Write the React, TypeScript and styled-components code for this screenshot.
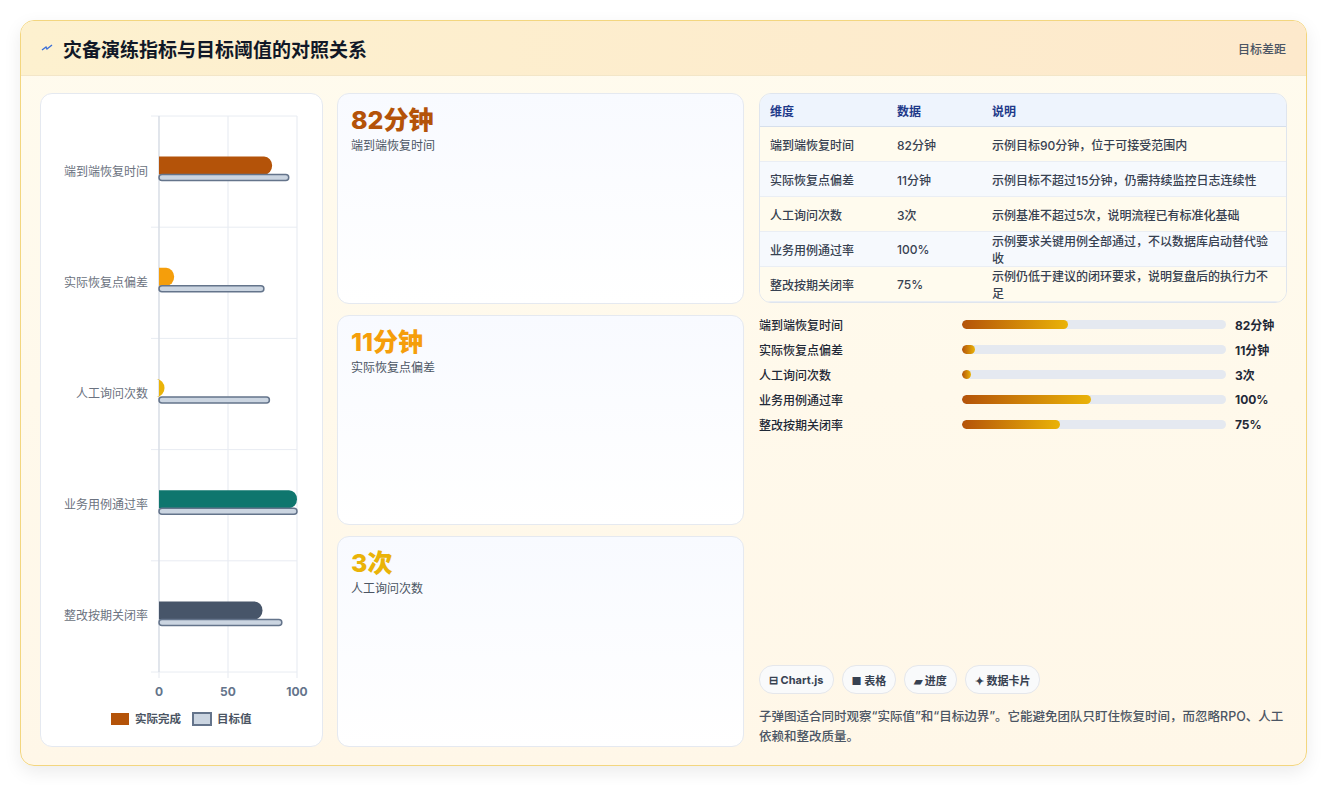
import React from 'react';
import styled, { createGlobalStyle } from 'styled-components';

const Global = createGlobalStyle`
  html, body { margin: 0; padding: 0; background: #ffffff; }
  body { font-family: Inter, "Noto Sans CJK SC", sans-serif; }
`;

const Page = styled.div`
  padding: 20px 20px 19px 20px;
`;

const Card = styled.div`
  border: 1px solid #f3d67f;
  border-radius: 14px;
  background: linear-gradient(180deg, #fffbee 0%, #fff7e8 100%);
  box-shadow: 0 6px 18px rgba(0, 0, 0, 0.08);
  overflow: hidden;
  height: 744px;
  display: flex;
  flex-direction: column;
`;

const Header = styled.div`
  height: 54px;
  display: flex;
  align-items: center;
  justify-content: space-between;
  padding: 0 20px 0 20px;
  background: linear-gradient(90deg, #fdf1cf 0%, #fde9cc 100%);
  border-bottom: 1px solid #f3e6c8;
`;

const Title = styled.h2`
  margin: 0;
  font-size: 19px;
  font-weight: 700;
  color: #111827;
  display: flex;
  align-items: center;
  gap: 10px;
`;

const HeaderHint = styled.span`
  font-size: 12px;
  color: #4b5563;
  font-weight: 500;
`;

const Body = styled.div`
  flex: 1;
  display: grid;
  grid-template-columns: 283px 407px 1fr;
  gap: 14px;
  padding: 17px 19px 18px 19px;
  min-height: 0;
`;

const Panel = styled.div`
  background: linear-gradient(180deg, #f8faff 0%, #ffffff 100%);
  border: 1px solid #e5e9f0;
  border-radius: 12px;
`;

const ChartPanel = styled(Panel)`
  background: #ffffff;
  display: flex;
  flex-direction: column;
`;

const Stack = styled.div`
  display: grid;
  grid-template-rows: 1fr 1fr 1fr;
  gap: 11px;
`;

const StatCard = styled(Panel)`
  padding: 10px 13px;
`;

const StatValue = styled.div<{ $color: string }>`
  font-size: 25px;
  font-weight: 800;
  color: ${p => p.$color};
  line-height: 32px;
`;

const StatLabel = styled.div`
  font-size: 12px;
  color: #4b5563;
`;

const RightCol = styled.div`
  display: flex;
  flex-direction: column;
  padding-left: 1px;
`;

const Table = styled.table`
  width: 100%;
  border-collapse: separate;
  border-spacing: 0;
  border: 1px solid #dfe5ee;
  border-radius: 12px;
  overflow: hidden;
  font-size: 12px;
`;

const Th = styled.th`
  text-align: left;
  font-weight: 700;
  color: #1e3a8a;
  background: #eef4fd;
  padding: 0 10px;
  height: 32px;
  border-bottom: 1px solid #d6dfec;
`;

const Td = styled.td<{ $alt: boolean }>`
  padding: 0 10px;
  height: 34px;
  color: #374151;
  font-weight: 500;
  background: ${p => (p.$alt ? '#f6f9fd' : '#fffbee')};
  border-bottom: 1px solid #eaeef4;
`;

const Bars = styled.div`
  display: flex;
  flex-direction: column;
  gap: 7px;
  margin-top: 12px;
`;

const BarRow = styled.div`
  display: grid;
  grid-template-columns: 194px 264px 1fr;
  gap: 9px;
  align-items: center;
  height: 18px;
  font-size: 12px;
  color: #1f2937;
  font-weight: 500;
`;

const Track = styled.div`
  height: 9px;
  border-radius: 5px;
  background: #e5e9f0;
  overflow: hidden;
`;

const Fill = styled.div`
  height: 100%;
  border-radius: 5px;
  background: linear-gradient(90deg, #b45309 0%, #eab308 100%);
`;

const BarValue = styled.span`
  font-weight: 700;
  color: #1f2937;
`;

const Spacer = styled.div`
  flex: 1;
`;

const Chips = styled.div`
  display: flex;
  gap: 8px;
`;

const Chip = styled.span`
  display: inline-flex;
  align-items: center;
  gap: 4px;
  height: 27px;
  padding: 0 9px;
  border: 1px solid #e5e7eb;
  border-radius: 14px;
  background: #f9fafb;
  font-size: 11px;
  font-weight: 700;
  color: #374151;
`;

const Note = styled.p`
  margin: 13px 0 0 0;
  font-size: 12.5px;
  line-height: 20px;
  color: #4b5563;
  font-weight: 500;
`;

const rows = [
  { name: '端到端恢复时间', data: '82分钟', desc: '示例目标90分钟，位于可接受范围内', pct: 40 },
  { name: '实际恢复点偏差', data: '11分钟', desc: '示例目标不超过15分钟，仍需持续监控日志连续性', pct: 5 },
  { name: '人工询问次数', data: '3次', desc: '示例基准不超过5次，说明流程已有标准化基础', pct: 3.5 },
  { name: '业务用例通过率', data: '100%', desc: '示例要求关键用例全部通过，不以数据库启动替代验收', pct: 49 },
  { name: '整改按期关闭率', data: '75%', desc: '示例仍低于建议的闭环要求，说明复盘后的执行力不足', pct: 37 },
];

const chartData = [
  { label: '端到端恢复时间', actual: 82, target: 94, color: '#b45309' },
  { label: '实际恢复点偏差', actual: 11, target: 76, color: '#f59e0b' },
  { label: '人工询问次数', actual: 4, target: 80, color: '#eab308' },
  { label: '业务用例通过率', actual: 100, target: 100, color: '#0f766e' },
  { label: '整改按期关闭率', actual: 75, target: 89, color: '#475569' },
];

const BulletChart = () => {
  const x0 = 118;
  const w = 138;
  const top = 22;
  const rowH = 111.2;
  const bottom = top + rowH * 5;
  const sx = (v: number) => x0 + (v / 100) * w;
  return (
    <svg width="281" height="651" viewBox="0 0 281 651">
      {[0, 50, 100].map(v => (
        <line key={v} x1={sx(v)} x2={sx(v)} y1={top} y2={bottom + 6} stroke="#e5e9f0" />
      ))}
      {[0, 1, 2, 3, 4, 5].map(i => (
        <line key={i} x1={x0 - 8} x2={x0 + w} y1={top + i * rowH} y2={top + i * rowH} stroke="#e8ecf2" />
      ))}
      <line x1={x0} x2={x0} y1={top} y2={bottom} stroke="#d1d7e0" />
      {chartData.map((d, i) => {
        const cy = top + i * rowH + rowH / 2;
        const aw = sx(d.actual) - x0;
        return (
          <g key={d.label}>
            <text x={x0 - 11} y={cy + 4} textAnchor="end" fontSize="12" fill="#6b7280" fontFamily="Inter, 'Noto Sans CJK SC', sans-serif">{d.label}</text>
            <path d={`M${x0} ${cy - 15} h${aw - 8} a8 9 0 0 1 0 18 h${-(aw - 8)} z`} fill={d.color} />
            <rect x={x0} y={cy + 3} width={sx(d.target) - x0} height={6} rx={3} fill="#cbd5e1" stroke="#64748b" strokeWidth="1.5" />
          </g>
        );
      })}
      {[0, 50, 100].map(v => (
        <text key={v} x={sx(v)} y={bottom + 24} textAnchor="middle" fontSize="12" fontWeight="700" fill="#64748b" fontFamily="Inter, sans-serif">{v}</text>
      ))}
      <rect x={70} y={619} width={18} height={12} fill="#b45309" />
      <text x={94} y={629} fontSize="11.5" fontWeight="600" fill="#4b5563" fontFamily="Inter, 'Noto Sans CJK SC', sans-serif">实际完成</text>
      <rect x={152} y={619} width={18} height={12} fill="#cbd5e1" stroke="#64748b" strokeWidth="2" />
      <text x={176} y={629} fontSize="11.5" fontWeight="600" fill="#4b5563" fontFamily="Inter, 'Noto Sans CJK SC', sans-serif">目标值</text>
    </svg>
  );
};

export default function App() {
  return (
    <>
      <Global />
      <Page>
        <Card>
          <Header>
            <Title>
              <svg width="12" height="10" viewBox="0 0 12 10">
                <path d="M1 7 L5 4 L6 6 L11 2" stroke="#3b6fd8" strokeWidth="1.4" fill="none" />
              </svg>
              灾备演练指标与目标阈值的对照关系
            </Title>
            <HeaderHint>目标差距</HeaderHint>
          </Header>
          <Body>
            <ChartPanel>
              <BulletChart />
            </ChartPanel>
            <Stack>
              <StatCard>
                <StatValue $color="#b45309">82分钟</StatValue>
                <StatLabel>端到端恢复时间</StatLabel>
              </StatCard>
              <StatCard>
                <StatValue $color="#f59e0b">11分钟</StatValue>
                <StatLabel>实际恢复点偏差</StatLabel>
              </StatCard>
              <StatCard>
                <StatValue $color="#eab308">3次</StatValue>
                <StatLabel>人工询问次数</StatLabel>
              </StatCard>
            </Stack>
            <RightCol>
              <Table>
                <thead>
                  <tr>
                    <Th style={{ width: 107 }}>维度</Th>
                    <Th style={{ width: 75 }}>数据</Th>
                    <Th>说明</Th>
                  </tr>
                </thead>
                <tbody>
                  {rows.map((r, i) => (
                    <tr key={r.name}>
                      <Td $alt={i % 2 === 1}>{r.name}</Td>
                      <Td $alt={i % 2 === 1}>{r.data}</Td>
                      <Td $alt={i % 2 === 1}>{r.desc}</Td>
                    </tr>
                  ))}
                </tbody>
              </Table>
              <Bars>
                {rows.map(r => (
                  <BarRow key={r.name}>
                    <span>{r.name}</span>
                    <Track>
                      <Fill style={{ width: `${r.pct}%` }} />
                    </Track>
                    <BarValue>{r.data}</BarValue>
                  </BarRow>
                ))}
              </Bars>
              <Spacer />
              <Chips>
                <Chip>⊟ Chart.js</Chip>
                <Chip>■ 表格</Chip>
                <Chip>▰ 进度</Chip>
                <Chip>✦ 数据卡片</Chip>
              </Chips>
              <Note>子弹图适合同时观察“实际值”和“目标边界”。它能避免团队只盯住恢复时间，而忽略RPO、人工依赖和整改质量。</Note>
            </RightCol>
          </Body>
        </Card>
      </Page>
    </>
  );
}
